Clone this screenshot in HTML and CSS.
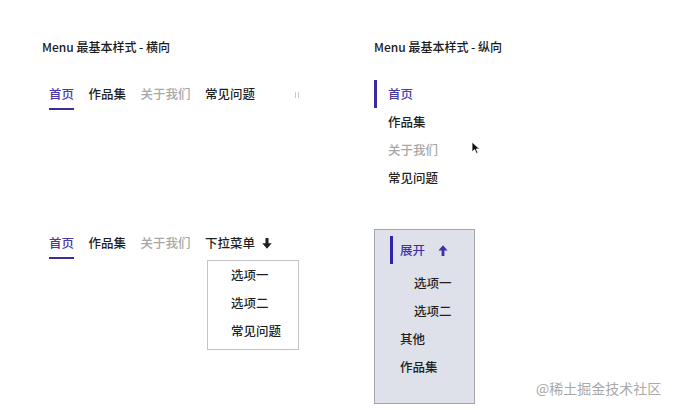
FILE: index.html
```html
<!DOCTYPE html>
<html lang="zh-CN">

<head>
  <meta charset="UTF-8">
  <meta name="viewport" content="width=device-width, initial-scale=1.0">
  <title>Menu 样式</title>
  <link rel="stylesheet" href="styles.css">
</head>

<body>
  <div class="page">
    <!-- 横向 -->
    <div class="cell">
      <h4 class="title">Menu 最基本样式 - 横向</h4>
      <ul class="menu-h">
        <li class="active">首页</li>
        <li>作品集</li>
        <li class="disabled">关于我们</li>
        <li>常见问题</li>
        <li class="grip"><i></i><i></i></li>
      </ul>
    </div>

    <!-- 纵向 -->
    <div class="cell">
      <h4 class="title">Menu 最基本样式 - 纵向</h4>
      <ul class="menu-v">
        <li class="active">首页</li>
        <li>作品集</li>
        <li class="disabled">关于我们</li>
        <li>常见问题</li>
      </ul>
    </div>

    <!-- 横向 + 下拉 -->
    <div class="cell">
      <ul class="menu-h">
        <li class="active">首页</li>
        <li>作品集</li>
        <li class="disabled">关于我们</li>
        <li class="has-sub">下拉菜单
          <svg class="arrow" width="10" height="11" viewBox="0 0 10 11">
            <path d="M3.5 0h3v5.3h3.2L5 10.8 0.3 5.3h3.2z" fill="#1f1f1f" />
          </svg>
          <ul class="dropdown">
            <li>选项一</li>
            <li>选项二</li>
            <li>常见问题</li>
          </ul>
        </li>
      </ul>
    </div>

    <!-- 纵向 + 展开 -->
    <div class="cell">
      <ul class="menu-box">
        <li class="active open">展开
          <svg class="arrow up" width="10" height="11" viewBox="0 0 10 11">
            <path d="M3.6 11h2.8V5.6h3.2L5 0.3 0.4 5.6h3.2z" fill="#3d32a8" />
          </svg>
        </li>
        <li class="sub">
          <ul>
            <li>选项一</li>
            <li>选项二</li>
          </ul>
        </li>
        <li>其他</li>
        <li>作品集</li>
      </ul>
    </div>
  </div>

  <svg class="cursor" width="9" height="13" viewBox="0 0 9 13">
    <path d="M1 1v10l2.6-2.4 1.8 3.9 1.6-.7-1.8-3.8H8.6z" fill="#111" stroke="#fff" stroke-width="0.8" />
  </svg>
  <div class="watermark">@稀土掘金技术社区</div>
</body>

</html>
```

FILE: styles.css
```css
* {
  box-sizing: border-box;
}
body {
  margin: 0;
  background: #fff;
  color: #1f1f1f;
  font-family: "Noto Sans CJK SC", "Noto Sans", sans-serif;
}
ul {
  list-style: none;
  margin: 0;
  padding: 0;
}
.page {
  display: grid;
  grid-template-columns: 332px 1fr;
  row-gap: 37px;
  padding: 39px 0 0 42px;
}
.title {
  margin: 0 0 25px;
  font-size: 12px;
  line-height: 16px;
  font-weight: 500;
  color: #1a1a1a;
}
.active {
  color: #4838a8;
}
.disabled {
  color: #a8a8a8;
}

/* 横向 */
.menu-h {
  display: flex;
  align-items: flex-start;
  gap: 14.5px;
  padding-left: 7px;
  font-size: 12.5px;
  font-weight: 500;
}
.menu-h > li {
  height: 30px;
  line-height: 28px;
  border-bottom: 2px solid transparent;
}
.menu-h > li.active {
  border-bottom-color: #3a2c9e;
}
.menu-h .grip {
  display: flex;
  gap: 2px;
  align-items: center;
  margin-left: 25px;
  height: 30px;
  padding-top: 1px;
}
.menu-h .grip i {
  width: 1px;
  height: 6px;
  background: #c8c8c8;
}
.has-sub {
  position: relative;
}
.has-sub .arrow {
  margin-left: 4px;
  vertical-align: -1px;
}
.dropdown {
  position: absolute;
  top: 31px;
  left: 2px;
  width: 92px;
  padding: 0 0 4px 23px;
  border: 1px solid #c4c4c4;
  background: #fff;
  font-weight: 500;
}
.dropdown li {
  line-height: 28px;
}

/* 纵向 */
.menu-v {
  font-size: 12.5px;
  font-weight: 500;
}
.menu-v li {
  line-height: 28px;
  padding-left: 11px;
  border-left: 3px solid transparent;
}
.menu-v li.active {
  border-left-color: #3a2c9e;
}

/* 纵向 展开 */
.menu-box {
  width: 101px;
  height: 175px;
  padding: 6px 0 0 15px;
  border: 1px solid #a4a6ad;
  background: #dee1ea;
  font-size: 12.5px;
  font-weight: 500;
}
.menu-box > li {
  line-height: 28px;
  padding-left: 7px;
  border-left: 3px solid transparent;
}
.menu-box > li.active {
  border-left-color: #2f23a6;
  color: #3d32b0;
}
.menu-box .arrow.up {
  margin-left: 10px;
  vertical-align: -1px;
}
.menu-box > li.sub {
  padding-top: 5px;
  padding-left: 21px;
}

.cursor {
  position: absolute;
  left: 471px;
  top: 141px;
}
.watermark {
  position: absolute;
  left: 536px;
  top: 379px;
  font-size: 14px;
  line-height: 18px;
  color: #a9a9a9;
}
```
